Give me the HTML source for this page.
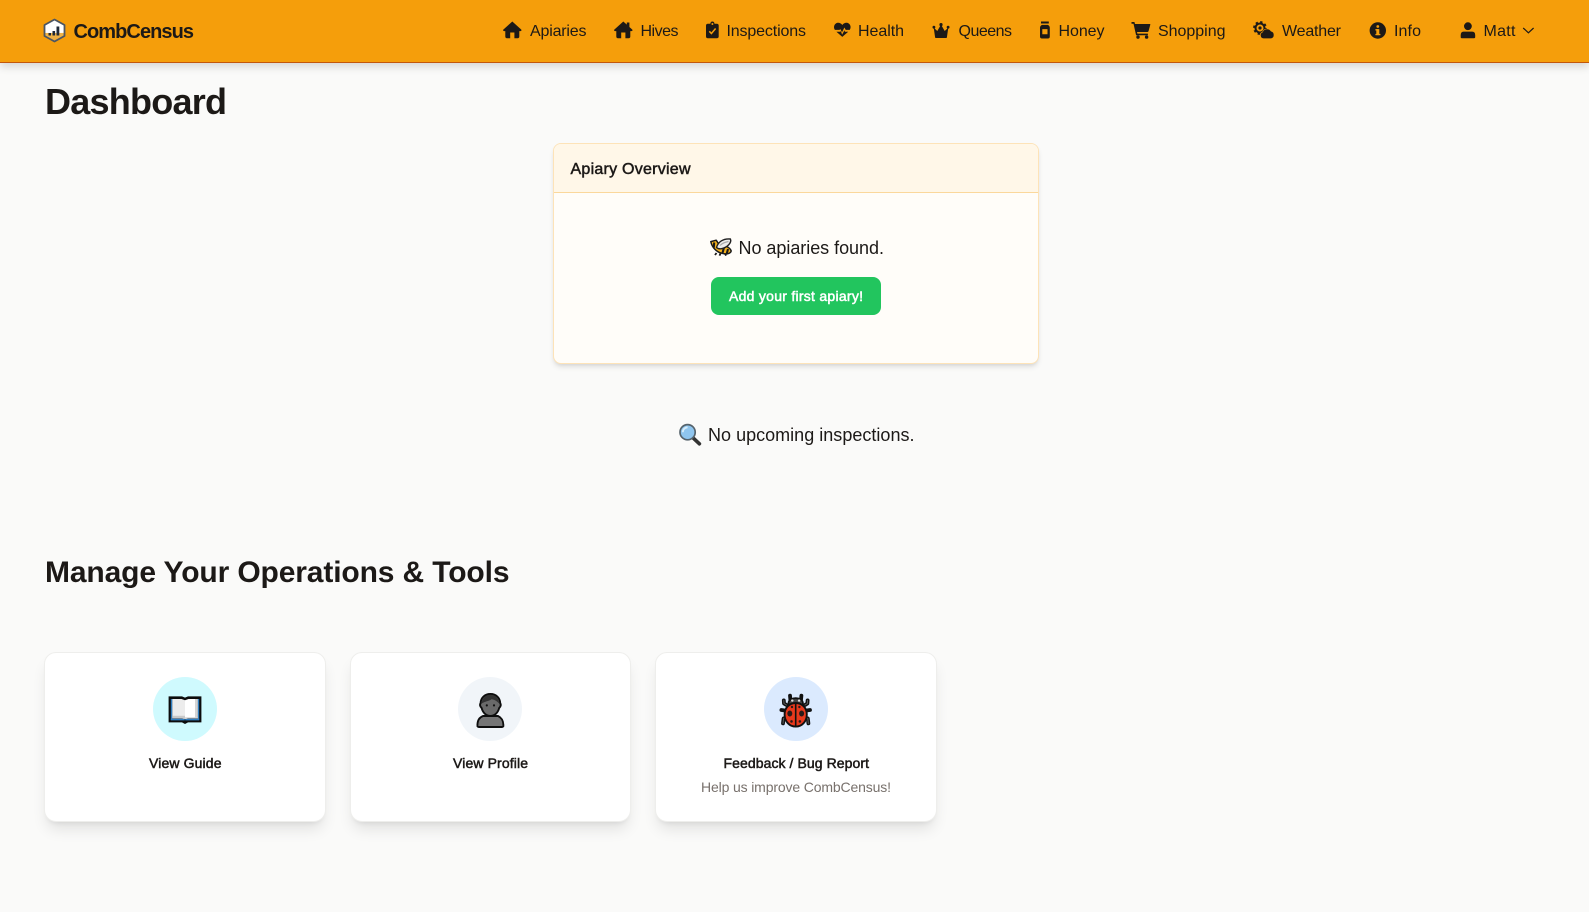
<!DOCTYPE html>
<html lang="en">
<head>
<meta charset="utf-8">
<title>CombCensus Dashboard</title>
<style>
html,body{margin:0;padding:0;width:1589px;height:912px;overflow:hidden;background:#fafaf9;font-family:"Liberation Sans",sans-serif;color:#1c1917}
.bar{position:absolute;left:0;top:0;width:1589px;height:62px;background:#f59e0b;border-bottom:1px solid #c2570c;box-shadow:0 4px 8px rgba(0,0,0,.14)}
.box{position:absolute;box-sizing:border-box}
.ov{left:553px;top:143px;width:486px;height:221px;background:#fffdf9;border:1px solid #fde3b8;border-radius:8px;box-shadow:0 4px 6px -1px rgba(0,0,0,.1),0 2px 4px -2px rgba(0,0,0,.1);overflow:hidden}
.ovh{height:48px;background:#fff7e8;border-bottom:1px solid #fbd89c}
.btn{left:711px;top:277px;width:170px;height:38px;background:#22c55e;border-radius:8px}
.card{top:652px;height:170px;background:#fff;border:1px solid #eeeeec;border-radius:12px;box-shadow:0 10px 15px -3px rgba(0,0,0,.1),0 4px 6px -4px rgba(0,0,0,.1)}
.dot{top:677px;width:64px;height:64px;border-radius:50%}
svg{position:absolute;left:0;top:0}
text{font-family:"Liberation Sans",sans-serif;fill:#1c1917}
.n{font-size:16px}
.b{font-weight:700}
.sb{stroke:#1c1917;stroke-width:.5px}
</style>
</head>
<body>
<div class="bar"></div>
<div class="box ov"><div class="ovh"></div></div>
<div class="box btn"></div>
<div class="box card" style="left:44px;width:281.5px"></div>
<div class="box card" style="left:350px;width:281px"></div>
<div class="box card" style="left:655px;width:281.5px"></div>
<div class="box dot" style="left:153px;background:#cffafe"></div>
<div class="box dot" style="left:458px;background:#f1f5f9"></div>
<div class="box dot" style="left:764px;background:#dbeafe"></div>

<svg width="1589" height="912" viewBox="0 0 1589 912" xmlns="http://www.w3.org/2000/svg">
  <defs>
    <linearGradient id="hx" x1="0" y1="0" x2="0" y2="1">
      <stop offset="0" stop-color="#fff"/><stop offset=".6" stop-color="#fff"/>
      <stop offset=".62" stop-color="#f0b54a"/><stop offset="1" stop-color="#e8a93d"/>
    </linearGradient>
  </defs>

  <!-- logo -->
  <path d="M54.5 19.5 L64.5 25 V36 L54.5 41.5 L44.5 36 V25 Z" fill="url(#hx)" stroke="#4b5563" stroke-width="1.8" stroke-linejoin="round"/>
  <g fill="#1f2937"><rect x="48.5" y="33" width="2.5" height="2.5"/><rect x="52.5" y="31" width="2.6" height="4.5"/><rect x="56.5" y="26.5" width="2.8" height="9"/></g>
  <text x="73.5" y="37.8" class="b" font-size="20" textLength="120.5">CombCensus</text>

  <!-- nav icons -->
  <g transform="translate(0,-1.5)">
    <g fill="#1c1917">
      <path transform="translate(503,23)" d="M9.3 0 L18.3 8.1 Q19 9.3 17.5 9.6 H16.3 V15 Q16.3 16.7 14.6 16.7 H11.4 V11 H7.2 V16.7 H4 Q2.3 16.7 2.3 15 V9.6 H1.1 Q-.4 9.3 .3 8.1 Z"/>
      <path transform="translate(614,23)" d="M9.3 0 L12.8 3.1 V1 H15.4 V5.5 L18.3 8.1 Q19 9.3 17.5 9.6 H16.3 V15 Q16.3 16.7 14.6 16.7 H11.4 V11 H7.2 V16.7 H4 Q2.3 16.7 2.3 15 V9.6 H1.1 Q-.4 9.3 .3 8.1 Z"/>
      <path transform="translate(706,23)" d="M4.3 2.2 Q4.6 0 6.4 0 Q8.2 0 8.5 2.2 H10.8 Q12.7 2.2 12.7 4.1 V14.9 Q12.7 16.8 10.8 16.8 H1.9 Q0 16.8 0 14.9 V4.1 Q0 2.2 1.9 2.2 Z"/>
      <path transform="translate(834,24)" d="M8.3 2.5 C9.8 .4 12.6 -.5 14.7 1 C17 2.6 17 5.6 15.7 7.4 H11.7 L10.4 5 L8 9.8 L6.4 6.6 L5.5 7.4 H.9 C-.4 5.6 -.4 2.6 1.9 1 C4 -.5 6.8 .4 8.3 2.5 Z M2.4 9.2 H6.3 L6.9 8.6 L8.1 12.2 L10.5 7.8 L10.9 9.2 H14.2 L8.3 14.4 Z"/>
      <g transform="translate(932.5,24.5)">
        <path d="M1.2 4.6 L4.8 8 L8.5 1.6 L12.2 8 L15.8 4.6 L14.4 14.4 Q14.3 15 13.6 15 H3.4 Q2.7 15 2.6 14.4 Z"/>
        <circle cx="8.5" cy="1.6" r="1.6"/><circle cx="1.4" cy="4.2" r="1.4"/><circle cx="15.6" cy="4.2" r="1.4"/>
      </g>
      <path fill-rule="evenodd" transform="translate(1040,23)" d="M1 0 H8.8 V2 H1 Z M1.9 3.4 H7.9 Q9.8 4.4 9.8 6.4 V15 Q9.8 17 7.8 17 H2 Q0 17 0 15 V6.4 Q0 4.4 1.9 3.4 Z M2.3 7.6 V12.8 H7.5 V7.6 Z"/>
      <path transform="translate(1131.5,23.5)" d="M0 0 H2.9 L3.5 2 H18.3 Q19 2 18.8 2.8 L17 9.3 Q16.8 10 16 10 H5.5 L5.9 11.6 H16.4 V13.2 H4.6 L2 1.7 H0 Z"/>
      <circle cx="1138" cy="38.6" r="1.7"/><circle cx="1146.6" cy="38.6" r="1.7"/>
      <circle cx="1377.8" cy="32" r="8.2"/>
      <circle cx="1467.9" cy="27.7" r="3.9"/>
      <path d="M1463.6 33.1 H1472.2 Q1475.2 33.1 1475.2 36.6 V38.6 Q1475.2 39.7 1474 39.7 H1461.8 Q1460.7 39.7 1460.7 38.6 V36.6 Q1460.7 33.1 1463.6 33.1 Z"/>
    </g>
    <path d="M709.3 32.8 L711.4 35 L715.6 30" fill="none" stroke="#f59e0b" stroke-width="1.5"/>
    <circle cx="712.4" cy="25.5" r="1" fill="#f59e0b"/>
    <g fill="#f59e0b"><rect x="1376.3" y="30.6" width="3" height="6"/><rect x="1375.4" y="30.6" width="2.5" height="1.4"/><rect x="1375.4" y="35.4" width="5" height="1.3"/><circle cx="1377.8" cy="28" r="1.4"/></g>
  </g>

  <!-- weather icon -->
  <circle cx="1260" cy="28" r="4.5" fill="none" stroke="#1c1917" stroke-width="2"/>
  <circle cx="1260" cy="28" r="5.9" fill="none" stroke="#1c1917" stroke-width="2" stroke-dasharray="2.3 2.33"/>
  <circle cx="1260" cy="28" r="1.6" fill="#1c1917"/>
  <path d="M1263.6 38.4 A3.2 3.2 0 0 1 1262.8 32.2 A4.5 4.5 0 0 1 1270.9 31.4 A3.6 3.6 0 0 1 1271 38.4 Z" fill="#1c1917" stroke="#f59e0b" stroke-width="1.1" paint-order="stroke"/>

  <!-- chevron -->
  <path d="M1523.2 28 L1528.4 32.8 L1533.6 28" fill="none" stroke="#1c1917" stroke-width="1.2"/>

  <!-- nav labels -->
  <text x="530" y="36" class="n" textLength="56.5">Apiaries</text>
  <text x="640.5" y="36" class="n" textLength="38">Hives</text>
  <text x="726.5" y="36" class="n" textLength="79.5">Inspections</text>
  <text x="858" y="36" class="n" textLength="46">Health</text>
  <text x="958.5" y="36" class="n" textLength="53.5">Queens</text>
  <text x="1058.5" y="36" class="n" textLength="46">Honey</text>
  <text x="1158" y="36" class="n" textLength="67.5">Shopping</text>
  <text x="1282" y="36" class="n" textLength="59">Weather</text>
  <text x="1394" y="36" class="n" textLength="27">Info</text>
  <text x="1483.5" y="36" class="n" textLength="32">Matt</text>

  <!-- headings -->
  <text x="45" y="114" class="b" font-size="36" textLength="182">Dashboard</text>
  <text x="45" y="582" class="b" font-size="30" textLength="464.5">Manage Your Operations &amp; Tools</text>

  <!-- overview card -->
  <text x="570.5" y="174" class="sb" font-size="16" textLength="120">Apiary Overview</text>
  <text x="738.5" y="254" font-size="18" textLength="145.5">No apiaries found.</text>
  <text x="729" y="301" font-size="14" textLength="134" style="fill:#fff;stroke:#fff;stroke-width:.5px">Add your first apiary!</text>
  <text x="708" y="441" font-size="18" textLength="206.5">No upcoming inspections.</text>

  <!-- bee -->
  <g transform="translate(710,238)" stroke-linejoin="round">
    <path d="M6.5 15 L5 17 M10.5 15.5 L9.5 17.6 M15 15.5 L16 17.6" stroke="#1a1a1a" stroke-width="1.8" fill="none"/>
    <path d="M.8 3.6 L6.2 2.2 L9 6.5 C13.5 6.5 20 9 21.2 13 C20.5 16 15.5 16.5 11.5 15.2 C6.5 13.8 2 9.5 .8 3.6 Z" fill="#f6b21b" stroke="#1a1a1a" stroke-width="1.5"/>
    <path d="M4.2 4.5 L3.8 9.5 M14 9.5 L12.5 15 M18 11 L16.8 15.5" stroke="#1a1a1a" stroke-width="2.1" fill="none"/>
    <path d="M6.5 9.5 C8 4 13 .3 20.4 1 C21.8 4.2 18 9.5 11 10.8 C9 11 7.5 10.5 6.5 9.5 Z" fill="#ececec" stroke="#222" stroke-width="1.4"/>
    <path d="M10 7.5 C12.5 5 15.5 4 18.5 3.5" stroke="#aaa" stroke-width="1.2" fill="none"/>
  </g>

  <!-- magnifier -->
  <path d="M693 437.8 L699.4 443.8" stroke="#333" stroke-width="3.6" stroke-linecap="round"/>
  <circle cx="687.6" cy="432.2" r="7.6" fill="#8fc5ee" stroke="#56636c" stroke-width="1.7"/>
  <path d="M682.8 432.2 A4.9 4.9 0 0 1 687.6 427.3" fill="none" stroke="#d8eefb" stroke-width="1.8"/>

  <!-- book -->
  <g transform="translate(168,695)">
    <path d="M.6 1.4 H14 L17 2.6 L20 1.4 H33.4 V27.4 H20 L17 29 L14 27.4 H.6 Z" fill="#0c0c0c"/>
    <path d="M2.8 4 H4.3 V25 H2.8 Z M29.7 4 H31.2 V25 H29.7 Z" fill="#2f7fc1"/>
    <path d="M2.8 23.8 H16.8 V25.4 H2.8 Z M17.2 23.8 H31.2 V25.4 H17.2 Z" fill="#2f7fc1"/>
    <path d="M4.3 4 H13.5 L17 5.2 V24 L13.5 23.4 H4.3 Z" fill="#ececec"/>
    <path d="M17 5.2 L20.5 4 H29.7 V23.4 H20.5 L17 24 Z" fill="#fff"/>
    <path d="M4.3 20.8 H17 V24 L13.5 23.4 H4.3 Z" fill="#c9c9c9"/>
    <path d="M17 22.2 H29.7 V23.4 H20.5 L17 24 Z" fill="#d6d6d6"/>
    <path d="M27 4 H29.7 V23.4 H27 Z" fill="#d4d4d4"/>
  </g>

  <!-- person -->
  <g transform="translate(476,693)">
    <path d="M3 34 H25.8 Q27.6 34 27.4 32.2 C27.2 27 25.5 24.6 22 23 L7 23 C3.2 24.6 1.6 27 1.4 32.2 Q1.2 34 3 34 Z" fill="#757575" stroke="#0d0d0d" stroke-width="1.9"/>
    <path d="M14.4 1 C8.5 1 4.8 5 4.6 10 C4 11 3.5 13 5.6 15 C6.8 19.5 10 23 14.4 23 C18.8 23 22 19.5 23.2 15 C25.3 13 24.8 11 24.2 10 C24 5 20.3 1 14.4 1 Z" fill="#6a6a6a" stroke="#0d0d0d" stroke-width="1.9"/>
    <path d="M5.6 10.5 C5.8 4.8 10 1.8 14.4 1.8 C19 1.8 23 4.8 23.2 10.5 C21 8 18 6.4 15.5 6.2 C13.5 8 8.5 8.4 5.6 10.5 Z" fill="#333"/>
    <circle cx="10.8" cy="12.4" r="1.1" fill="#111"/><circle cx="18" cy="12.4" r="1.1" fill="#111"/>
  </g>

  <!-- ladybug -->
  <g transform="translate(779,693)">
    <g fill="none" stroke="#111" stroke-width="3.8" stroke-linecap="round" stroke-linejoin="round">
      <path d="M11.4 7 L11 2.6 M22 7 L22.4 2.6"/>
      <path d="M7.5 12 L5 10.5 L4.8 7.4 M26 12 L28.4 10.5 L28.6 7.4"/>
      <path d="M6 17.5 L2.4 17 M27.4 17.5 L31 17"/>
      <path d="M7 25 L4.6 25.4 L4 30.4 M26.4 25 L28.8 25.4 L29.4 30.4"/>
    </g>
    <g fill="none" stroke="#5a5a5a" stroke-width="1" stroke-linecap="round" stroke-linejoin="round">
      <path d="M7.5 12 L5 10.5 L4.8 7.4 M26 12 L28.4 10.5 L28.6 7.4 M7 25 L4.6 25.4 L4 30.4 M26.4 25 L28.8 25.4 L29.4 30.4"/>
    </g>
    <path d="M9.5 10 C10 3.6 23.4 3.6 23.9 10 L24 13 H9.5 Z" fill="#444" stroke="#111" stroke-width="1.8"/>
    <circle cx="13.3" cy="7.6" r="1.2" fill="#ddd"/><circle cx="20.1" cy="7.6" r="1.2" fill="#ddd"/>
    <path d="M16.7 10 C10 10 5.6 15 5.6 21.5 C5.6 28.5 10.5 33.6 16.7 33.6 C22.9 33.6 27.8 28.5 27.8 21.5 C27.8 15 23.4 10 16.7 10 Z" fill="#e8391c" stroke="#111" stroke-width="1.9"/>
    <path d="M16.7 10 V33.6" stroke="#111" stroke-width="1.6"/>
    <g fill="#2a1a18"><ellipse cx="10.8" cy="20.5" rx="2.5" ry="3"/><ellipse cx="22.6" cy="20.5" rx="2.5" ry="3"/><circle cx="13" cy="14" r="1.2"/><circle cx="20.4" cy="14" r="1.2"/><circle cx="12.5" cy="28.4" r="1.3"/><circle cx="20.9" cy="28.4" r="1.3"/></g>
  </g>

  <!-- card labels -->
  <text x="149" y="768" class="sb" font-size="14" textLength="72.5">View Guide</text>
  <text x="453" y="768" class="sb" font-size="14" textLength="75">View Profile</text>
  <text x="723.5" y="768" class="sb" font-size="14" textLength="145.5">Feedback / Bug Report</text>
  <text x="701" y="792" font-size="14" textLength="190" style="fill:#78716c">Help us improve CombCensus!</text>
</svg>
</body>
</html>
